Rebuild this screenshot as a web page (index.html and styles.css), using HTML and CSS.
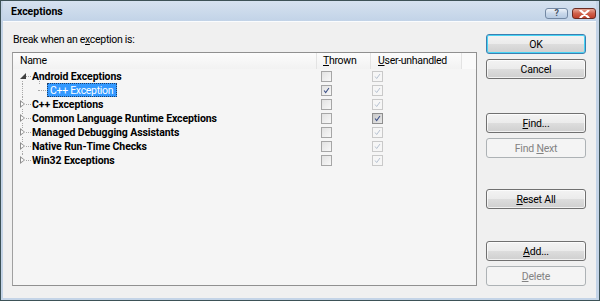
FILE: index.html
```html
<!DOCTYPE html>
<html lang="en">
<head>
  <meta charset="UTF-8">
  <title>Exceptions</title>
  <link rel="stylesheet" href="styles.css">
</head>
<body>
  <div class="window">
    <div class="titlebar">
      <span class="title">Exceptions</span>
      <div class="caption-btns">
        <span class="cap help">?</span>
        <span class="cap close">
          <svg width="11" height="8" viewBox="0 0 11 8"><path d="M1.5 0.5 L9.5 7.5 M9.5 0.5 L1.5 7.5" stroke="#fff" stroke-width="2.2" stroke-linecap="round"/></svg>
        </span>
      </div>
    </div>

    <div class="client">
      <div class="main">
        <div class="prompt">Break when an e<u>x</u>ception is:</div>

        <div class="list">
          <div class="list-head">
            <div class="hcell">Name</div>
            <div class="hcell"><u>T</u>hrown</div>
            <div class="hcell"><u>U</u>ser-unhandled</div>
            <div class="hcell filler"></div>
          </div>

          <div class="row first">
            <div class="tree"><span class="twisty open"></span><span class="label bold">Android Exceptions</span></div>
            <div class="cell thrown"><span class="cb"></span></div>
            <div class="cell user"><span class="cb off checked"><svg viewBox="0 0 11 11"><path d="M2.5 5.5 L4.5 8 L8.5 2.5" fill="none" stroke="#b4c0d0" stroke-width="1.2"/></svg></span></div>
          </div>
          <div class="row child">
            <div class="tree"><span class="label selected">C++ Exception</span></div>
            <div class="cell thrown"><span class="cb checked"><svg viewBox="0 0 11 11"><path d="M2.5 5.5 L4.5 8 L8.5 2.5" fill="none" stroke="#3b4f86" stroke-width="1.3"/></svg></span></div>
            <div class="cell user"><span class="cb off checked"><svg viewBox="0 0 11 11"><path d="M2.5 5.5 L4.5 8 L8.5 2.5" fill="none" stroke="#b4c0d0" stroke-width="1.2"/></svg></span></div>
          </div>
          <div class="row">
            <div class="tree"><span class="twisty"></span><span class="label bold">C++ Exceptions</span></div>
            <div class="cell thrown"><span class="cb"></span></div>
            <div class="cell user"><span class="cb off checked"><svg viewBox="0 0 11 11"><path d="M2.5 5.5 L4.5 8 L8.5 2.5" fill="none" stroke="#b4c0d0" stroke-width="1.2"/></svg></span></div>
          </div>
          <div class="row">
            <div class="tree"><span class="twisty"></span><span class="label bold">Common Language Runtime Exceptions</span></div>
            <div class="cell thrown"><span class="cb"></span></div>
            <div class="cell user"><span class="cb checked dark"><svg viewBox="0 0 11 11"><path d="M2.5 5.5 L4.5 8 L8.5 2.5" fill="none" stroke="#3b4f86" stroke-width="1.3"/></svg></span></div>
          </div>
          <div class="row">
            <div class="tree"><span class="twisty"></span><span class="label bold">Managed Debugging Assistants</span></div>
            <div class="cell thrown"><span class="cb"></span></div>
            <div class="cell user"><span class="cb off checked"><svg viewBox="0 0 11 11"><path d="M2.5 5.5 L4.5 8 L8.5 2.5" fill="none" stroke="#b4c0d0" stroke-width="1.2"/></svg></span></div>
          </div>
          <div class="row">
            <div class="tree"><span class="twisty"></span><span class="label bold">Native Run-Time Checks</span></div>
            <div class="cell thrown"><span class="cb"></span></div>
            <div class="cell user"><span class="cb off checked"><svg viewBox="0 0 11 11"><path d="M2.5 5.5 L4.5 8 L8.5 2.5" fill="none" stroke="#b4c0d0" stroke-width="1.2"/></svg></span></div>
          </div>
          <div class="row last">
            <div class="tree"><span class="twisty"></span><span class="label bold">Win32 Exceptions</span></div>
            <div class="cell thrown"><span class="cb"></span></div>
            <div class="cell user"><span class="cb off checked"><svg viewBox="0 0 11 11"><path d="M2.5 5.5 L4.5 8 L8.5 2.5" fill="none" stroke="#b4c0d0" stroke-width="1.2"/></svg></span></div>
          </div>
        </div>
      </div>

      <div class="buttons">
        <button class="btn default">OK</button>
        <button class="btn">Cancel</button>
        <button class="btn gap-find"><u>F</u>ind...</button>
        <button class="btn" disabled>Find <u>N</u>ext</button>
        <button class="btn gap-reset"><u>R</u>eset All</button>
        <button class="btn gap-add"><u>A</u>dd...</button>
        <button class="btn" disabled><u>D</u>elete</button>
      </div>
    </div>
  </div>
</body>
</html>
```

FILE: styles.css
```css
:root {
  --frame: #c4d4e7;
  --client-bg: #f0f0f0;
  --list-bg: #f5f5f5;
  --line: #a8a8a8;
  --select: #3399ff;
}

html, body {
  margin: 0;
  padding: 0;
  background: #f0f0f0;
  font-family: Roboto, 'Noto Sans', sans-serif;
  font-size: 10.5px;
  letter-spacing: -0.3px;
  color: #000;
}

.window {
  width: 600px;
  height: 301px;
  box-sizing: border-box;
  border: 1px solid #3d5257;
  background: var(--frame);
  padding: 0 3px 2px 2px;
  display: flex;
  flex-direction: column;
}

.titlebar {
  height: 20px;
  display: flex;
  align-items: center;
  background: linear-gradient(#d6e2f0, #c2d3e7);
}

.title {
  font-weight: bold;
  font-size: 10.5px;
  letter-spacing: 0;
  padding-left: 8px;
  padding-top: 1px;
}

.caption-btns {
  margin-left: auto;
  display: flex;
  gap: 4px;
  padding-top: 5px;
}

.cap {
  height: 11px;
  box-sizing: border-box;
  border-radius: 3px;
  display: flex;
  align-items: center;
  justify-content: center;
}

.help {
  width: 23px;
  border: 1px solid #7489a4;
  background: linear-gradient(#eef3fa, #c9d8ea 50%, #b6cae2);
  color: #4a5668;
  font-weight: bold;
  font-size: 9px;
  line-height: 9px;
}

.close {
  width: 24px;
  border: 1px solid #6b2b22;
  background: linear-gradient(#eaa897, #d0604a 50%, #c0402a);
}

.close svg {
  display: block;
}

.client {
  flex: 1;
  background: var(--client-bg);
  border-top: 1px solid #fafcfe;
  display: flex;
}

.main {
  margin-left: 9px;
  width: 465px;
  display: flex;
  flex-direction: column;
}

.prompt {
  margin-top: 10px;
  padding-left: 1px;
  height: 15px;
  line-height: 15px;
  margin-bottom: 5px;
}

.list {
  height: 234px;
  box-sizing: border-box;
  border: 1px solid #909090;
  border-left-color: #a0a0a0;
  background: var(--list-bg);
}

.list-head,
.row {
  display: grid;
  grid-template-columns: 304px 54px 91px 14px;
}

.list-head {
  height: 15px;
  border-bottom: 1px solid #d5d5d5;
}

.hcell {
  background: linear-gradient(#fcfcfc, #f2f2f2);
  border-right: 1px solid #e3e3e3;
  line-height: 16px;
  padding-left: 7px;
  white-space: nowrap;
}

.hcell:nth-child(2) {
  padding-left: 6px;
}

.hcell:nth-child(3) {
  padding-left: 7px;
}

.hcell.filler {
  background: #fafafa;
  border-right: none;
  padding: 0;
}

.row {
  height: 14px;
}

.tree {
  position: relative;
  display: flex;
  align-items: center;
}

/* tree lines */
.tree::before {
  content: "";
  position: absolute;
  left: 9px;
  top: 0;
  bottom: 0;
  border-left: 1px dotted var(--line);
}

.row.first .tree::before {
  top: 8px;
}

.row.last .tree::before {
  bottom: 7px;
}

.tree::after {
  content: "";
  position: absolute;
  left: 12px;
  width: 6px;
  top: 7px;
  border-top: 1px dotted var(--line);
}

.row.child .tree::after {
  left: 25px;
  width: 8px;
}

.row.child .label {
  position: relative;
}

.row.child .tree .label::before {
  content: "";
  position: absolute;
  left: -9px;
  top: -6px;
  height: 6px;
  border-left: 1px dotted var(--line);
}

.twisty {
  position: absolute;
  left: 7px;
  top: 3px;
  width: 6px;
  height: 8px;
  z-index: 1;
  background: var(--list-bg);
}

.twisty::before {
  content: "";
  position: absolute;
  left: 0;
  top: 0;
  border-style: solid;
  border-width: 4px 0 4px 5px;
  border-color: transparent transparent transparent #8d8d8d;
}

.twisty::after {
  content: "";
  position: absolute;
  left: 1px;
  top: 2px;
  border-style: solid;
  border-width: 2px 0 2px 3px;
  border-color: transparent transparent transparent #fff;
}

.twisty.open {
  top: 4px;
}

.twisty.open::before {
  border-width: 0 0 6px 6px;
  border-color: transparent transparent #404040 transparent;
}

.twisty.open::after {
  display: none;
}

.label {
  padding-left: 19px;
  white-space: nowrap;
  line-height: 15px;
}

.bold {
  font-weight: bold;
  letter-spacing: -0.1px;
}

.label.selected {
  margin-left: 34px;
  padding: 0 3px 0 2px;
  height: 12px;
  line-height: 13px;
  background: var(--select);
  color: #fff;
  border: 1px dotted #1d3f6a;
}

.cell {
  display: flex;
  align-items: center;
}

.cell.thrown {
  padding-left: 4px;
}

.cell.user {
  padding-left: 1px;
}

.cb {
  width: 11px;
  height: 11px;
  box-sizing: border-box;
  border: 1px solid #a6a6a6;
  background: linear-gradient(135deg, #e2e2e2, #f8f8f8);
  display: block;
}

.cb svg {
  display: block;
  width: 9px;
  height: 9px;
}

.cb.off {
  border-color: #c9c9c9;
  background: #f6f6f6;
}

.cb.dark {
  border-color: #8e8e8e;
  background: linear-gradient(135deg, #c8c8c8, #e8e8e8);
}

.buttons {
  margin-left: 9px;
  width: 100px;
  display: flex;
  flex-direction: column;
  padding-top: 12px;
}

.btn {
  height: 20px;
  width: 100px;
  box-sizing: border-box;
  margin: 0 0 5px 0;
  padding: 0;
  font-family: inherit;
  font-size: 10.5px;
  letter-spacing: -0.2px;
  color: #000;
  border: 1px solid #707070;
  border-radius: 3px;
  background: linear-gradient(#f3f3f3, #ebebeb 50%, #dddddd 51%, #cfcfcf);
  box-shadow: inset 0 0 0 1px rgba(255, 255, 255, 0.7);
}

.btn.default {
  border-color: #3c7fb1;
  box-shadow: inset 0 0 0 1px #48d4f4;
}

.btn:disabled {
  color: #838383;
  border-color: #adb2b5;
  background: #f4f4f4;
  box-shadow: none;
}

.gap-find {
  margin-top: 29px;
}

.gap-reset {
  margin-top: 26px;
}

.gap-add {
  margin-top: 27px;
}
```
